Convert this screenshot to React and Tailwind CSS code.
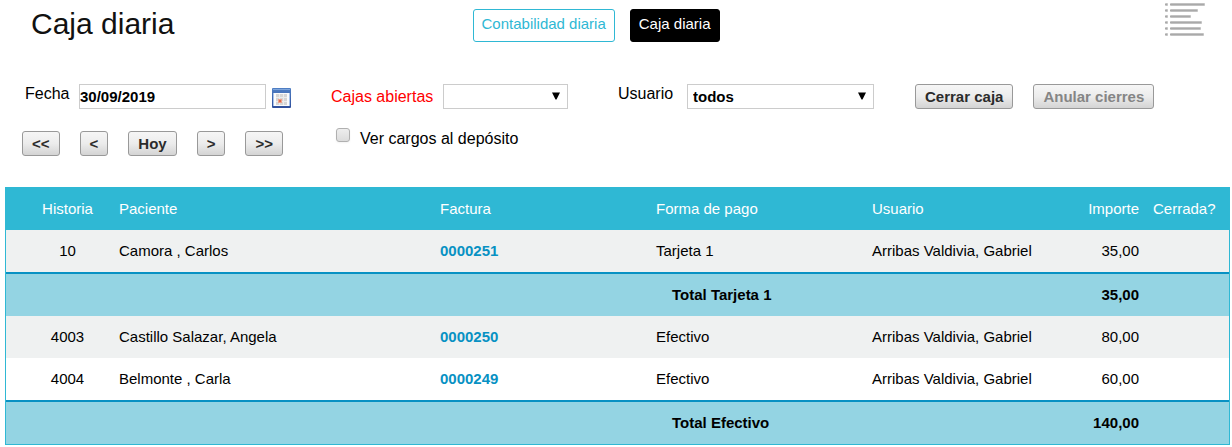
import React, { useState } from "react";

const groups = [
  {
    name: "Tarjeta 1",
    total: "35,00",
    rows: [{ id: "10", patient: "Camora , Carlos", invoice: "0000251", user: "Arribas Valdivia, Gabriel", amount: "35,00" }],
  },
  {
    name: "Efectivo",
    total: "140,00",
    rows: [
      { id: "4003", patient: "Castillo Salazar, Angela", invoice: "0000250", user: "Arribas Valdivia, Gabriel", amount: "80,00" },
      { id: "4004", patient: "Belmonte , Carla", invoice: "0000249", user: "Arribas Valdivia, Gabriel", amount: "60,00" },
    ],
  },
];

const buttonStyle =
  "h-[25px] px-[9px] border border-[#999] rounded-[3px] bg-linear-to-b from-[#f6f6f6] via-[#ececec] to-[#d4d4d4] text-[15px] leading-[23px] font-bold text-[#2b2b2b] disabled:text-[#858585]";

function ListIcon() {
  const widths = [35, 28, 21, 32, 31, 34];
  return (
    <svg width="40" height="33" viewBox="0 0 40 33" aria-hidden="true">
      {widths.map((w, i) => (
        <g key={w}>
          <rect x="0" y={i * 6} width="3" height="3" rx="1" fill="#c2c2c2" />
          <rect x="5" y={i * 6} width={w} height="3" rx="1" fill="#c2c2c2" />
          <rect x="0" y={i * 6 + 1} width="2" height="1" fill="#a9a9a9" />
          <rect x="5" y={i * 6 + 1} width={w - 1} height="1" fill="#a9a9a9" />
        </g>
      ))}
    </svg>
  );
}

function CalendarIcon() {
  return (
    <svg width="19" height="20" viewBox="0 0 19 20" aria-hidden="true">
      <defs>
        <linearGradient id="frame" x1="0" y1="0" x2="0" y2="1">
          <stop offset="0" stopColor="#4f7fc4" />
          <stop offset="1" stopColor="#2f4f9c" />
        </linearGradient>
      </defs>
      <rect width="19" height="20" rx="1" fill="url(#frame)" />
      <rect x="1" y="1" width="17" height="1" fill="#7fa6dc" />
      <rect x="1" y="5" width="17" height="13" fill="#a9c3ea" />
      <rect x="2" y="5" width="15" height="13" fill="#fbfbfb" />
      <rect x="4" y="6" width="11" height="11" fill="#d6d6d6" />
      <path d="M4 9.5h11M4 13.5h11M7.5 6v11M11.5 6v11" stroke="#ececec" />
      <rect x="6" y="11" width="4" height="4" fill="#efa18c" />
      <rect x="7" y="12" width="2" height="2" fill="#dd6a4c" />
    </svg>
  );
}

function Select({ id, options, className }) {
  return (
    <div className={`relative ${className}`}>
      <select id={id} className="block w-full h-[25px] appearance-none border border-[#ccc] bg-white pl-[5px] pr-5 text-[15px] leading-[23px] font-bold text-black">
        {options.map((o) => (
          <option key={o}>{o}</option>
        ))}
      </select>
      <svg className="pointer-events-none absolute right-2 top-2" width="8" height="8" viewBox="0 0 8 8" aria-hidden="true">
        <path d="M0 0.5h8L4.5 7.5h-1z" fill="#000" />
      </svg>
    </div>
  );
}

export default function App() {
  const [date, setDate] = useState("30/09/2019");
  return (
    <div className="bg-white text-black font-['Liberation_Sans',Arial,sans-serif]">
      <header className="grid grid-cols-[442fr_auto_486fr] items-start pl-[31px] pr-[27px]">
        <h1 className="pt-1 text-[30px] leading-10 text-[#111]">Caja diaria</h1>
        <nav className="flex gap-[15px] pt-[9px] text-[15px] leading-[27px]">
          <a href="#contabilidad" className="h-[33px] px-2 border border-[#2fb8d4] rounded-[3px] text-[#2fb8d4]">Contabilidad diaria</a>
          <a href="#caja" className="h-[33px] px-2 border border-black rounded-[3px] bg-black text-white">Caja diaria</a>
        </nav>
        <button aria-label="Menú" className="justify-self-end pt-[3px]">
          <ListIcon />
        </button>
      </header>

      <form onSubmit={(e) => e.preventDefault()} className="grid grid-cols-[309fr_287fr_297fr_317fr] gap-y-[22px] pl-[22px] pt-10 text-base leading-5">
        <div className="flex items-start pl-[3px]">
          <label htmlFor="fecha" className="w-[54px]">Fecha</label>
          <input id="fecha" value={date} onChange={(e) => setDate(e.target.value)} className="w-[187px] h-[25px] border border-[#ccc] text-[15px] font-bold" />
          <button type="button" aria-label="Calendario" className="ml-1.5 mt-1">
            <CalendarIcon />
          </button>
        </div>
        <div className="flex items-start">
          <label htmlFor="cajas" className="w-28 pt-[3px] text-[#f00]">Cajas abiertas</label>
          <Select id="cajas" options={[""]} className="w-[125px]" />
        </div>
        <div className="flex items-start">
          <label htmlFor="usuario" className="w-[69px]">Usuario</label>
          <Select id="usuario" options={["todos"]} className="w-[187px]" />
        </div>
        <div className="flex items-start gap-5">
          <button type="button" className={buttonStyle}>Cerrar caja</button>
          <button type="button" disabled className={buttonStyle}>Anular cierres</button>
        </div>

        <div className="flex items-start gap-5">
          {["<<", "<", "Hoy", ">", ">>"].map((t) => (
            <button key={t} type="button" className={buttonStyle}>{t}</button>
          ))}
        </div>
        <div className="flex items-start pl-[5px]">
          <input id="cargos" type="checkbox" className="size-[14px] mt-[-3px] mr-2.5 appearance-none border border-[#b0b0b0] rounded-[3px] bg-linear-to-b from-[#eee] to-[#dcdcdc] shadow-xs checked:bg-[#2fb8d4]" />
          <label htmlFor="cargos" className="-mt-0.5">Ver cargos al depósito</label>
        </div>
      </form>

      <div className="mt-[31px] ml-[5px] mr-0.5 border border-[#2fb8d4]">
        <table className="w-full table-fixed border-separate border-spacing-0 text-[15px] leading-5 [&_td]:px-[7px] [&_th]:px-[7px] [&_th]:font-normal">
          <colgroup>
            <col className="w-[17px]" />
            <col className="w-[89px]" />
            <col />
            <col className="w-[216px]" />
            <col className="w-[216px]" />
            <col className="w-[201px]" />
            <col className="w-[80px]" />
            <col className="w-[83px]" />
          </colgroup>
          <thead className="bg-[#2fb8d4] text-left text-white">
            <tr className="h-[42px]">
              <th></th>
              <th className="text-center">Historia</th>
              <th>Paciente</th>
              <th>Factura</th>
              <th>Forma de pago</th>
              <th>Usuario</th>
              <th className="text-right">Importe</th>
              <th>Cerrada?</th>
            </tr>
          </thead>
          {groups.map((g) => (
            <tbody key={g.name}>
              {g.rows.map((r) => (
                <tr key={r.id} className="h-[42px] odd:bg-[#eff1f1]">
                  <td></td>
                  <td className="text-center">{r.id}</td>
                  <td>{r.patient}</td>
                  <td><a href={`#${r.invoice}`} className="font-bold text-[#0891c3]">{r.invoice}</a></td>
                  <td>{g.name}</td>
                  <td>{r.user}</td>
                  <td className="text-right">{r.amount}</td>
                  <td></td>
                </tr>
              ))}
              <tr className="h-11 bg-[#94d4e3] font-bold [&_td]:border-t-2 [&_td]:border-[#0891c3]">
                <td colSpan={4}></td>
                <td colSpan={2}><span className="pl-4">Total {g.name}</span></td>
                <td className="text-right">{g.total}</td>
                <td></td>
              </tr>
            </tbody>
          ))}
        </table>
      </div>
    </div>
  );
}
